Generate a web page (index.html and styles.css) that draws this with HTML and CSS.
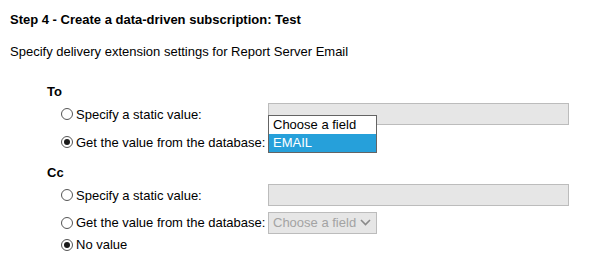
FILE: index.html
```html
<!DOCTYPE html>
<html lang="en">
<head>
    <meta charset="UTF-8">
    <title>Create a data-driven subscription</title>
    <link rel="stylesheet" href="styles.css">
</head>
<body>
    <h2 class="step-title">Step 4 - Create a data-driven subscription: Test</h2>
    <p class="intro">Specify delivery extension settings for Report Server Email</p>

    <div class="param param-to">
        <div class="param-name">To</div>
        <div class="param-rows">
            <label class="option">
                <span class="radio"></span>
                <span>Specify a static value:</span>
            </label>
            <div class="text-box"></div>

            <label class="option">
                <span class="radio checked"></span>
                <span>Get the value from the database:</span>
            </label>
            <div class="field-select open">
                <div class="select-box"><span>EMAIL</span></div>
                <ul class="select-list">
                    <li>Choose a field</li>
                    <li class="selected">EMAIL</li>
                </ul>
            </div>
        </div>
    </div>

    <div class="param param-cc">
        <div class="param-name">Cc</div>
        <div class="param-rows">
            <label class="option">
                <span class="radio"></span>
                <span>Specify a static value:</span>
            </label>
            <div class="text-box"></div>

            <label class="option">
                <span class="radio"></span>
                <span>Get the value from the database:</span>
            </label>
            <div class="field-select">
                <div class="select-box disabled">
                    <span>Choose a field</span>
                    <svg width="11" height="7" viewBox="0 0 11 7"><path d="M1 1 L5.5 5.5 L10 1" fill="none" stroke="#8a8a8a" stroke-width="1.6"/></svg>
                </div>
            </div>

            <label class="option last">
                <span class="radio checked"></span>
                <span>No value</span>
            </label>
        </div>
    </div>
</body>
</html>
```

FILE: styles.css
```css
body {
    font-family: "Liberation Sans", Arial, sans-serif;
    font-size: 13px;
    color: #000;
    background: #fff;
    margin: 0;
    padding: 12px 10px 0 10px;
}
.step-title {
    margin: 0;
    font-size: 13px;
    font-weight: bold;
    line-height: 15px;
}
.intro {
    margin: 17px 0 0 0;
    line-height: 15px;
}
.param {
    margin-left: 37px;
}
.param-to {
    margin-top: 25px;
}
.param-cc {
    margin-top: 9px;
}
.param-name {
    font-weight: bold;
    line-height: 15px;
}
.param-rows {
    display: grid;
    grid-template-columns: 207px 301px;
    grid-auto-rows: 28px;
    align-items: center;
    margin-left: 14px;
    margin-top: 1px;
}
.param-cc .param-rows {
    grid-template-rows: 28px 27px 17px;
}
.option {
    display: flex;
    align-items: center;
    gap: 3px;
    white-space: nowrap;
}
.option.last {
    grid-column: 1 / 3;
}
.radio {
    width: 10px;
    height: 10px;
    border: 1px solid #555;
    border-radius: 50%;
    box-sizing: content-box;
    position: relative;
    background: #fff;
}
.radio.checked::after {
    content: "";
    position: absolute;
    left: 2px;
    top: 2px;
    width: 6px;
    height: 6px;
    border-radius: 50%;
    background: #1a1a1a;
}
.text-box {
    height: 20px;
    border: 1px solid #bcbcbc;
    background: #e6e6e6;
}
.field-select {
    position: relative;
    width: 109px;
    height: 22px;
}
.select-box {
    height: 20px;
    border: 1px solid #bcbcbc;
    background: #e6e6e6;
    display: flex;
    align-items: center;
    justify-content: space-between;
    padding: 0 5px 0 4px;
    color: #a3a3a3;
}
.select-list {
    position: absolute;
    left: 0;
    top: -16px;
    width: 107px;
    margin: 0;
    padding: 0;
    list-style: none;
    background: #fff;
    border: 1px solid #646464;
    z-index: 2;
}
.select-list li {
    height: 18px;
    line-height: 18px;
    padding: 0 4px;
    font-size: 13px;
    color: #000;
}
.select-list li.selected {
    background: #26a0da;
    color: #fff;
}
```
